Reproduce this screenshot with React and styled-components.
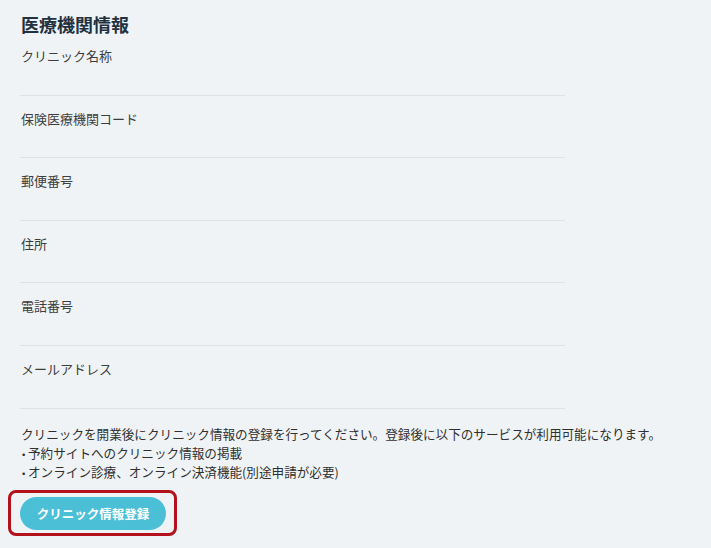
import React from 'react';
import styled, { createGlobalStyle } from 'styled-components';

const GlobalStyle = createGlobalStyle`
  html, body {
    margin: 0;
    padding: 0;
    background-color: #eff3f6;
  }
  body {
    font-family: "Noto Sans CJK JP", "Noto Sans", sans-serif;
    color: #333;
  }
`

const Page = styled.div`
  min-height: 548px;
  padding: 14px 0 0 21px;
  box-sizing: border-box;
`

const Title = styled.h2`
  margin: 0;
  font-size: 18px;
  line-height: 20px;
  font-weight: 700;
  color: #223141;
`

const FieldList = styled.div`
  width: 545px;
  margin: -1px 0 0 -1px;
`

const Field = styled.div`
  height: 62.6px;
  box-sizing: border-box;
  padding: 13px 0 0 1px;
  border-bottom: 1px solid #dde2e6;
`

const Label = styled.div`
  font-size: 13px;
  line-height: 20px;
  color: #3d3d3d;
`

const Notice = styled.div`
  margin-top: 15px;
  font-size: 12.6px;
  color: #303030;
`

const NoticeLine = styled.div`
  height: 19px;
  line-height: 19px;
  white-space: nowrap;
`

const Bullet = styled.span`
  display: inline-block;
  width: 7px;
  line-height: 0;
  font-family: "DejaVu Sans", sans-serif;
  font-size: 9px;
`

const Highlight = styled.div`
  display: inline-block;
  margin: 9px 0 0 -13px;
  padding: 4px 8px 3px 9px;
  border: 3px solid #b3121c;
  border-radius: 8px;
`

const RegisterButton = styled.button`
  display: block;
  width: 146px;
  height: 33px;
  border: none;
  border-radius: 17px;
  background-color: #4bbfd6;
  color: #fff;
  font-family: "Noto Sans CJK JP", sans-serif;
  font-size: 12.5px;
  font-weight: 700;
  cursor: pointer;
`

const fields = [
  'クリニック名称',
  '保険医療機関コード',
  '郵便番号',
  '住所',
  '電話番号',
  'メールアドレス',
]

const App = () => {
  return (
    <>
      <GlobalStyle />
      <Page>
        <Title>医療機関情報</Title>
        <FieldList>
          {fields.map((f) => (
            <Field key={f}>
              <Label>{f}</Label>
            </Field>
          ))}
        </FieldList>
        <Notice>
          <NoticeLine>クリニックを開業後にクリニック情報の登録を行ってください。登録後に以下のサービスが利用可能になります。</NoticeLine>
          <NoticeLine><Bullet>•</Bullet>予約サイトへのクリニック情報の掲載</NoticeLine>
          <NoticeLine><Bullet>•</Bullet>オンライン診療、オンライン決済機能(別途申請が必要)</NoticeLine>
        </Notice>
        <Highlight>
          <RegisterButton>クリニック情報登録</RegisterButton>
        </Highlight>
      </Page>
    </>
  )
}

export default App
